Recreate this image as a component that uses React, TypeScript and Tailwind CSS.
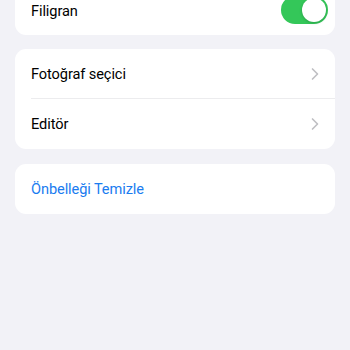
import { ChevronRight } from "lucide-react"

function Row({ label, last }: { label: string; last?: boolean }) {
  return (
    <div className="relative flex h-[50px] items-center justify-between pl-4 pr-[10px]">
      <span className="pt-[2px] text-[14.6px] tracking-[-0.1px] text-black">{label}</span>
      <ChevronRight size={20} strokeWidth={2} className="text-[#bfbfc3]" />
      {!last && <div className="absolute bottom-0 left-4 right-0 h-px bg-[#ececee]" />}
    </div>
  )
}

export default function App() {
  return (
    <main
      className="min-h-[350px] w-[350px] overflow-hidden bg-[#f2f2f7] px-[15px]"
      style={{ fontFamily: "Roboto, 'Noto Sans', sans-serif" }}
    >
      {/* Filigran card, top is scrolled off */}
      <section className="-mt-[15px] rounded-[11px] bg-white">
        <div className="flex h-[50px] items-center justify-between pl-4 pr-[7px]">
          <span className="pt-[3px] text-[14.6px] tracking-[-0.1px] text-black">Filigran</span>
          <div className="flex h-[28px] w-[47px] items-center justify-end rounded-full bg-[#34c759] p-[2px]">
            <div className="h-[24px] w-[24px] rounded-full bg-white shadow-[0_1px_3px_rgba(0,0,0,0.2)]" />
          </div>
        </div>
      </section>

      <section className="mt-[14px] rounded-[11px] bg-white">
        <Row label="Fotoğraf seçici" />
        <Row label="Editör" last />
      </section>

      <section className="mt-[15px] rounded-[11px] bg-white">
        <div className="flex h-[50px] items-center pl-4">
          <span className="pt-[2px] text-[14.6px] tracking-[-0.1px] text-[#1a7cf0]">Önbelleği Temizle</span>
        </div>
      </section>
    </main>
  )
}
